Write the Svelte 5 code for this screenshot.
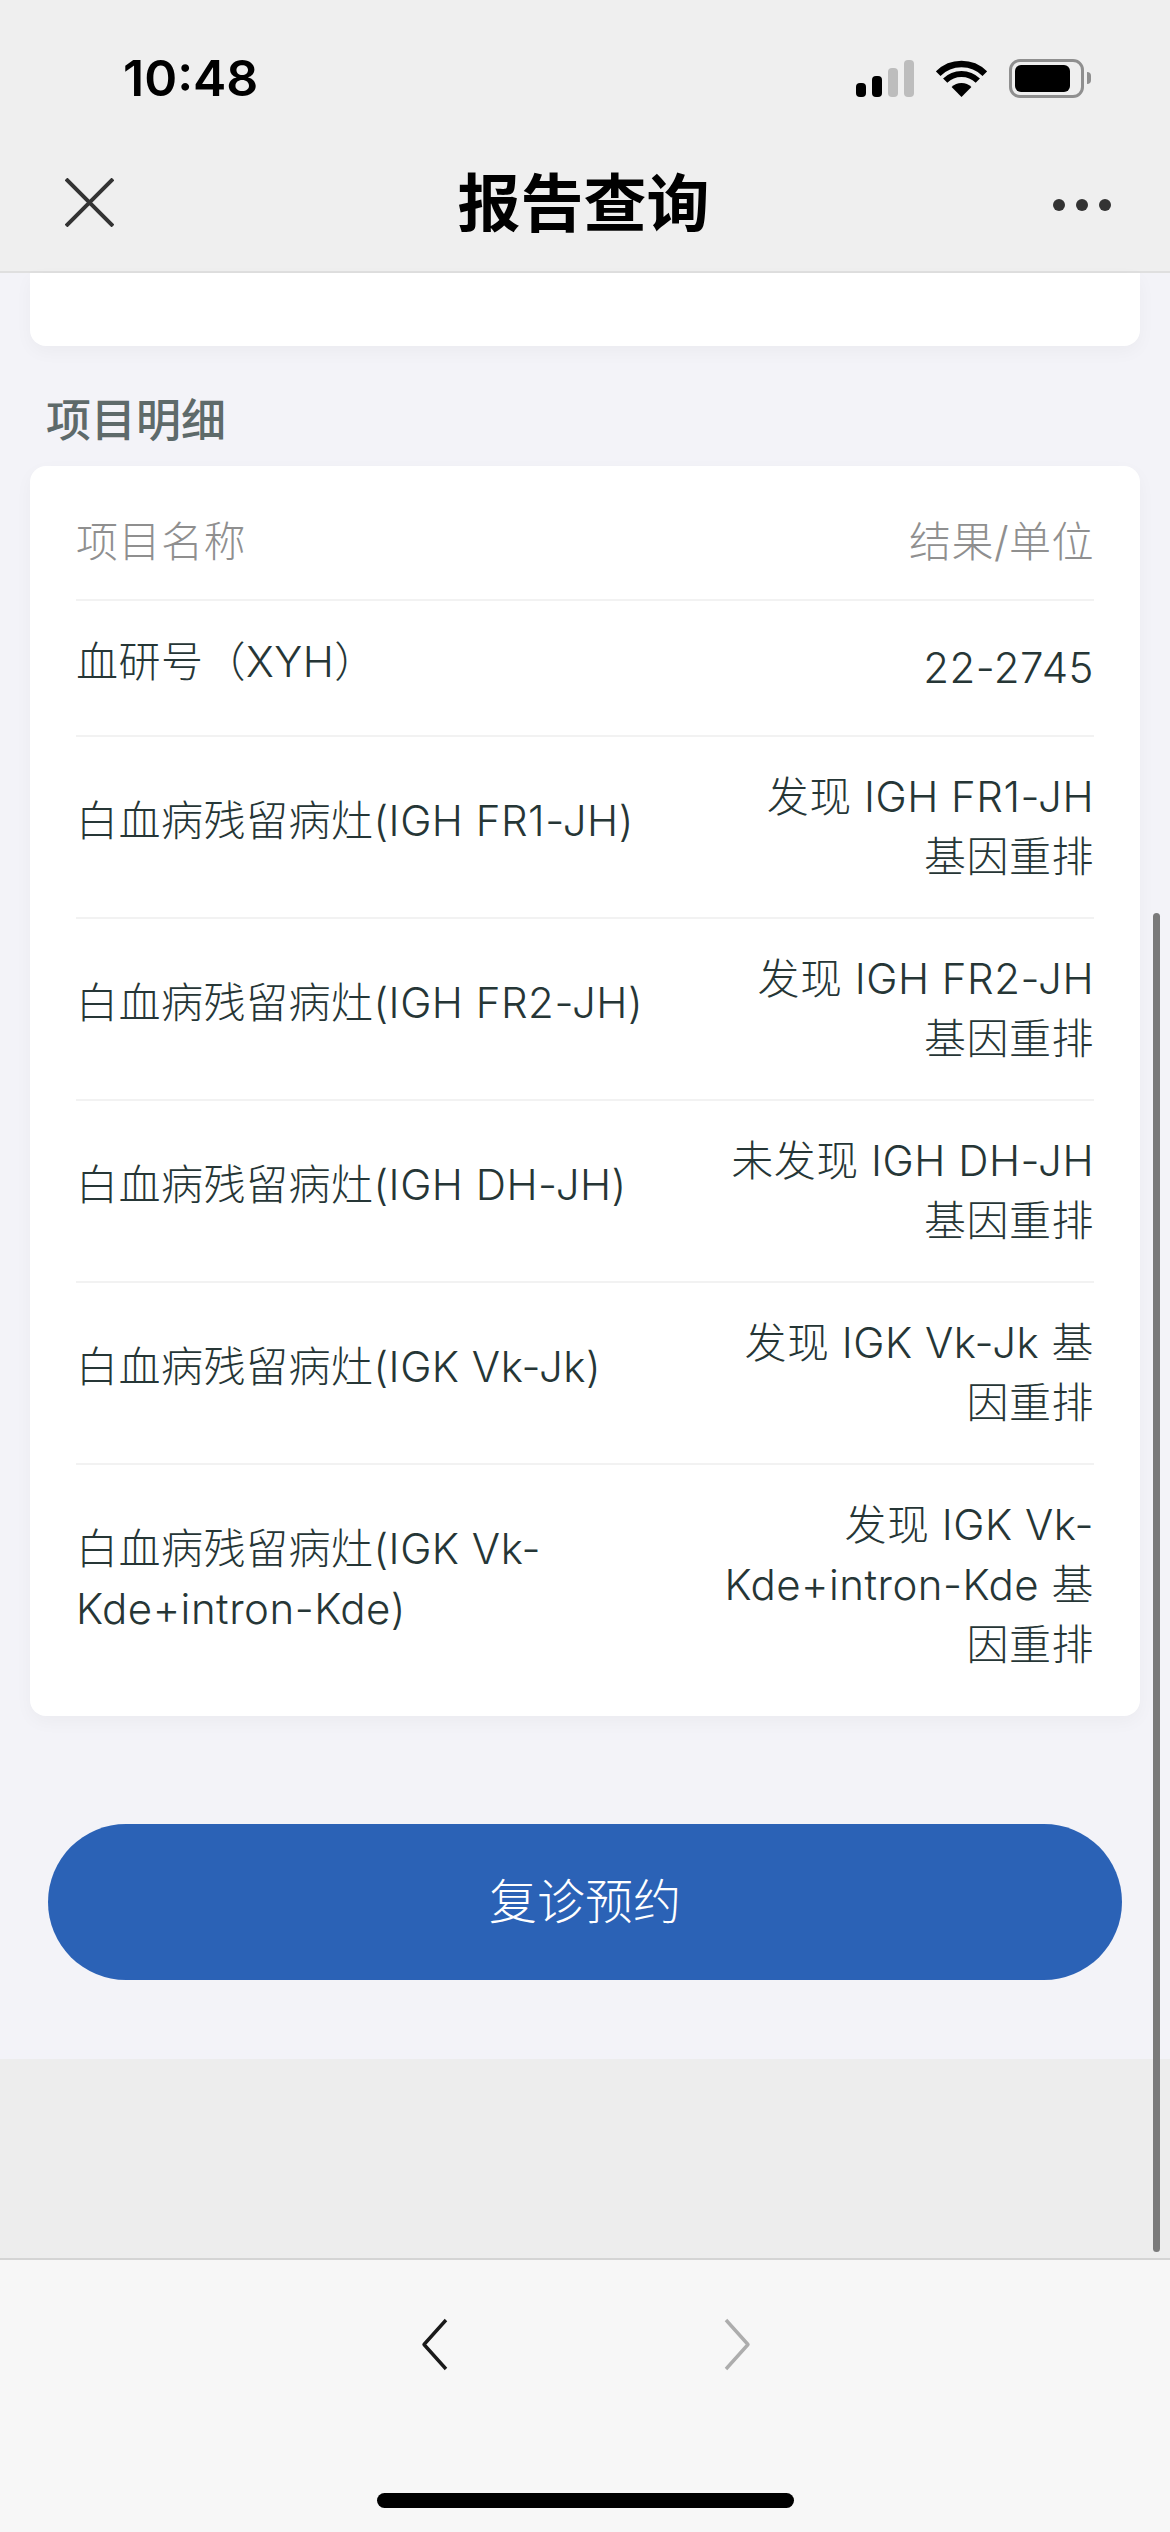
<script>
  const rows = [
    { name: '白血病残留病灶(IGH FR1-JH)', value: '发现 IGH FR1-JH 基因重排' },
    { name: '白血病残留病灶(IGH FR2-JH)', value: '发现 IGH FR2-JH 基因重排' },
    { name: '白血病残留病灶(IGH DH-JH)', value: '未发现 IGH DH-JH 基因重排' },
    { name: '白血病残留病灶(IGK Vk-Jk)', value: '发现 IGK Vk-Jk 基因重排' },
    { name: '白血病残留病灶(IGK Vk-Kde+intron-Kde)', value: '发现 IGK Vk-Kde+intron-Kde 基因重排' }
  ];
</script>

<div class="screen">
  <header class="top">
    <div class="status">
      <span class="time">10:48</span>
      <div class="status-icons">
        <div class="signal">
          <i class="b1"></i><i class="b2"></i><i class="b3 off"></i><i class="b4 off"></i>
        </div>
        <svg class="wifi" width="51" height="37" viewBox="0 0 51 37">
          <path d="M25.5 37 L15.6 27 A14 14 0 0 1 35.4 27 Z" fill="#000" />
          <path d="M9.2 20.7 A23 23 0 0 1 41.8 20.7" fill="none" stroke="#000" stroke-width="6" />
          <path d="M2.2 13.7 A33 33 0 0 1 48.8 13.7" fill="none" stroke="#000" stroke-width="6.5" />
        </svg>
        <div class="battery"><div class="fill"></div></div>
        <div class="cap"></div>
      </div>
    </div>
    <nav class="nav">
      <svg class="close" width="49" height="49" viewBox="0 0 49 49">
        <path d="M1 1 L48 48 M48 1 L1 48" stroke="#333" stroke-width="4" fill="none" />
      </svg>
      <h1>报告查询</h1>
      <div class="more"><i></i><i></i><i></i></div>
    </nav>
  </header>

  <main class="page">
    <div class="card stub"></div>
    <h2>项目明细</h2>
    <section class="card detail">
      <div class="row head">
        <span>项目名称</span>
        <span>结果/单位</span>
      </div>
      <div class="row first">
        <span class="name">血研号（XYH）</span>
        <span class="value">22-2745</span>
      </div>
      {#each rows as r}
        <div class="row">
          <span class="name">{r.name}</span>
          <span class="value">{r.value}</span>
        </div>
      {/each}
    </section>
    <div class="action"><button>复诊预约</button></div>
  </main>

  <div class="gap"></div>

  <footer class="toolbar">
    <div class="arrows">
      <svg width="27" height="53" viewBox="0 0 27 53">
        <path d="M25 2 L3 26.5 L25 51" fill="none" stroke="#1a1a1a" stroke-width="3.4" stroke-linejoin="round" />
      </svg>
      <svg width="27" height="53" viewBox="0 0 27 53">
        <path d="M2 2 L24 26.5 L2 51" fill="none" stroke="#adadad" stroke-width="3.4" stroke-linejoin="round" />
      </svg>
    </div>
    <div class="home"></div>
  </footer>

  <div class="scrollbar"></div>
</div>

<style>
  :global(body) {
    margin: 0;
    background: #f7f7f7;
  }
  .screen {
    position: relative;
    width: 1170px;
    height: 2532px;
    overflow: hidden;
    display: flex;
    flex-direction: column;
    font-family: Inter, "Noto Sans CJK SC", sans-serif;
  }
  .top {
    height: 273px;
    box-sizing: border-box;
    background: #efefef;
    border-bottom: 2px solid #dfdfdf;
    flex: none;
  }
  .status {
    height: 150px;
    box-sizing: border-box;
    padding: 50px 79px 0 123px;
    display: flex;
    justify-content: space-between;
    align-items: flex-start;
  }
  .time {
    font-weight: 600;
    font-size: 50px;
    line-height: 56px;
    color: #000;
  }
  .status-icons {
    display: flex;
    align-items: flex-end;
    height: 47px;
  }
  .signal {
    display: flex;
    align-items: flex-end;
    gap: 6px;
    margin-right: 22px;
  }
  .signal i {
    display: block;
    width: 10px;
    border-radius: 4px;
    background: #000;
  }
  .signal .off { background: #bdbdbd; }
  .b1 { height: 14px; }
  .b2 { height: 21px; }
  .b3 { height: 29px; }
  .b4 { height: 37px; }
  .wifi { margin-right: 22px; }
  .battery {
    width: 75px;
    height: 39px;
    box-sizing: border-box;
    border: 3px solid #8f8f8f;
    border-radius: 11px;
    padding: 3px;
    margin-bottom: -1px;
  }
  .fill {
    width: 55px;
    height: 27px;
    background: #000;
    border-radius: 6px;
  }
  .cap {
    width: 4px;
    height: 12px;
    background: #8f8f8f;
    border-radius: 0 6px 6px 0;
    margin: 0 0 13px 3px;
  }
  .nav {
    display: flex;
    align-items: center;
    justify-content: space-between;
    padding: 0 59px 0 65px;
    height: 104px;
  }
  .nav h1 {
    margin: 0 0 6px;
    font-size: 63px;
    line-height: 72px;
    font-weight: 700;
    color: #000;
    font-family: "Noto Sans CJK SC", sans-serif;
  }
  .more {
    display: flex;
    gap: 11px;
    margin-top: 6px;
  }
  .more i {
    display: block;
    width: 12px;
    height: 12px;
    border-radius: 50%;
    background: #333;
  }
  .page {
    background: #f3f3f8;
    height: 1786px;
    box-sizing: border-box;
    flex: none;
    padding: 0 30px;
  }
  .card {
    background: #fff;
    box-shadow: 0 6px 18px rgba(0, 0, 0, 0.035);
  }
  .stub {
    height: 73px;
    border-radius: 0 0 16px 16px;
  }
  h2 {
    margin: 0;
    padding: 42px 16px 18px;
    font-size: 45px;
    line-height: 60px;
    font-weight: 500;
    color: #5e6a6a;
    font-family: "Noto Sans CJK SC", sans-serif;
  }
  .detail {
    border-radius: 16px;
    padding: 0 46px 16px 46px;
    height: 1250px;
    box-sizing: border-box;
    font-weight: 300;
  }
  .row {
    display: flex;
    justify-content: space-between;
    align-items: center;
    gap: 20px;
    box-sizing: border-box;
    padding: 30px 0;
    border-bottom: 2px solid #f2f2f2;
    font-size: 42px;
    line-height: 60px;
    color: #263636;
    letter-spacing: 0.5px;
  }
  .row:last-child { border-bottom: 0; }
  .head {
    height: 135px;
    padding: 19px 0 0;
    color: #8f8f8f;
  }
  .first {
    height: 136px;
    align-items: flex-start;
    padding-top: 31px;
  }
  .first .value { margin-top: 6px; }
  .name { flex: 1; margin-bottom: 13px; }
  .first .name { margin-bottom: 0; }
  .value {
    width: 375px;
    flex: none;
    text-align: right;
  }
  .action {
    padding: 108px 18px 0;
  }
  .action button {
    display: block;
    width: 100%;
    height: 156px;
    border: 0;
    border-radius: 78px;
    background: #2b62b6;
    color: #fff;
    font: inherit;
    font-size: 48px;
    font-weight: 300;
    padding: 0 0 8px;
  }
  .gap {
    flex: none;
    height: 201px;
    background: #ededed;
    border-bottom: 2px solid #d4d4d4;
    box-sizing: border-box;
  }
  .toolbar {
    flex: 1;
    background: #f7f7f7;
    position: relative;
  }
  .arrows {
    display: flex;
    justify-content: center;
    gap: 276px;
    padding: 58px 0 0 2px;
  }
  .home {
    position: absolute;
    left: 377px;
    bottom: 24px;
    width: 417px;
    height: 15px;
    border-radius: 8px;
    background: #000;
  }
  .scrollbar {
    position: absolute;
    left: 1153px;
    top: 913px;
    width: 7px;
    height: 1339px;
    border-radius: 4px;
    background: #7a7a7a;
  }
</style>
